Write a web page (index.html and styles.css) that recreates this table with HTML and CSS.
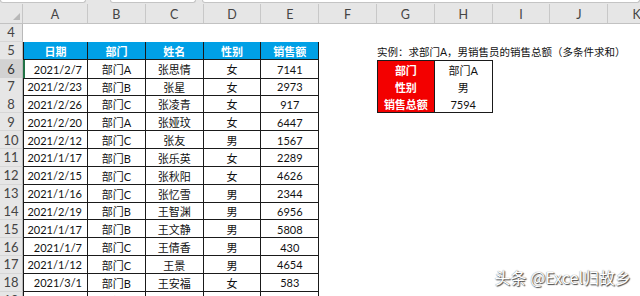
FILE: index.html
```html
<!DOCTYPE html>
<html lang="zh">
<head>
<meta charset="utf-8">
<link rel="stylesheet" href="styles.css">
</head>
<body>
<div class="screen">
  <div class="topbar">
    <div class="box b1"></div>
    <div class="box b2"></div>
    <div class="box b3"></div>
  </div>
  <div class="colhead">
    <div class="corner"><span class="tri"></span></div>
    <div class="ch">A</div><div class="ch">B</div><div class="ch">C</div><div class="ch">D</div><div class="ch">E</div>
    <div class="ch">F</div><div class="ch">G</div><div class="ch">H</div><div class="ch">I</div><div class="ch">J</div><div class="ch">K</div>
  </div>

  <div class="row"><div class="rh">4</div></div>

  <div class="row">
    <div class="rh">5</div>
    <div class="t th first">日期</div><div class="t th">部门</div><div class="t th">姓名</div><div class="t th">性别</div><div class="t th">销售额</div>
    <div class="note">实例：求部门A，男销售员的销售总额（多条件求和）</div>
  </div>

  <div class="row">
    <div class="rh sel">6</div>
    <div class="t first r active">2021/2/7</div><div class="t">部门A</div><div class="t">张思情</div><div class="t">女</div><div class="t">7141</div>
    <div class="k red top">部门</div><div class="k val top">部门A</div>
  </div>
  <div class="row">
    <div class="rh">7</div>
    <div class="t first r">2021/2/23</div><div class="t">部门B</div><div class="t">张星</div><div class="t">女</div><div class="t">2973</div>
    <div class="k red">性别</div><div class="k val">男</div>
  </div>
  <div class="row">
    <div class="rh">8</div>
    <div class="t first r">2021/2/26</div><div class="t">部门C</div><div class="t">张凌青</div><div class="t">女</div><div class="t">917</div>
    <div class="k red">销售总额</div><div class="k val">7594</div>
  </div>
  <div class="row">
    <div class="rh">9</div>
    <div class="t first r">2021/2/20</div><div class="t">部门A</div><div class="t">张娅玟</div><div class="t">女</div><div class="t">6447</div>
  </div>
  <div class="row">
    <div class="rh">10</div>
    <div class="t first r">2021/2/12</div><div class="t">部门C</div><div class="t">张友</div><div class="t">男</div><div class="t">1567</div>
  </div>
  <div class="row">
    <div class="rh">11</div>
    <div class="t first r">2021/1/17</div><div class="t">部门B</div><div class="t">张乐英</div><div class="t">女</div><div class="t">2289</div>
  </div>
  <div class="row">
    <div class="rh">12</div>
    <div class="t first r">2021/2/15</div><div class="t">部门C</div><div class="t">张秋阳</div><div class="t">女</div><div class="t">4626</div>
  </div>
  <div class="row">
    <div class="rh">13</div>
    <div class="t first r">2021/1/16</div><div class="t">部门C</div><div class="t">张忆雪</div><div class="t">男</div><div class="t">2344</div>
  </div>
  <div class="row">
    <div class="rh">14</div>
    <div class="t first r">2021/2/19</div><div class="t">部门B</div><div class="t">王智渊</div><div class="t">男</div><div class="t">6956</div>
  </div>
  <div class="row">
    <div class="rh">15</div>
    <div class="t first r">2021/1/17</div><div class="t">部门B</div><div class="t">王文静</div><div class="t">男</div><div class="t">5808</div>
  </div>
  <div class="row">
    <div class="rh">16</div>
    <div class="t first r">2021/1/7</div><div class="t">部门C</div><div class="t">王倩香</div><div class="t">男</div><div class="t">430</div>
  </div>
  <div class="row">
    <div class="rh">17</div>
    <div class="t first r">2021/1/12</div><div class="t">部门C</div><div class="t">王景</div><div class="t">男</div><div class="t">4654</div>
  </div>
  <div class="row">
    <div class="rh">18</div>
    <div class="t first r">2021/3/1</div><div class="t">部门B</div><div class="t">王安福</div><div class="t">女</div><div class="t">583</div>
  </div>
  <div class="row">
    <div class="rh">19</div>
    <div class="t first r">2021/2/20</div><div class="t">部门A</div><div class="t">王语嫣</div><div class="t">男</div><div class="t">574</div>
  </div>

  <div class="watermark">头条 @Excel归故乡</div>
</div>
</body>
</html>
```

FILE: styles.css
```css
* { box-sizing: border-box; }
html, body { margin: 0; padding: 0; background: #fff; }
body { width: 640px; height: 296px; overflow: hidden; }

.screen {
  position: relative;
  width: 640px;
  height: 296px;
  overflow: hidden;
  font-family: "Lato", "Noto Sans CJK SC", sans-serif;
  font-size: 11px;
  color: #111;
}

.topbar {
  height: 4px;
  background: #e6e6e6;
  display: flex;
  gap: 0;
}
.box {
  height: 3px;
  background: #fff;
  border: 1px solid #c4c4c4;
  border-top: none;
  border-radius: 0 0 3px 3px;
}
.b1 { width: 86px; }
.b2 { width: 86px; margin-left: 24px; }
.b3 { flex: 1; margin-left: 6px; }

.colhead, .row {
  display: grid;
  grid-template-columns: 23px 65px repeat(10, 57.8px);
}
.colhead {
  height: 20px;
  background: #e6e6e6;
  border-bottom: 1px solid #c2c2c2;
}
.corner {
  position: relative;
  border-right: 1px solid #c6c6c6;
}
.tri {
  position: absolute;
  right: 2px;
  bottom: 3px;
  width: 0;
  height: 0;
  border-left: 7px solid transparent;
  border-bottom: 7px solid #b8b8b8;
}
.ch {
  display: flex;
  align-items: center;
  justify-content: center;
  border-right: 1px solid #c8c8c8;
  color: #444;
  font-family: "Lato", sans-serif;
  font-size: 12.5px;
  padding-top: 2px;
}

.row { height: 17.85px; }
.rh {
  display: flex;
  align-items: center;
  justify-content: center;
  background: #e6e6e6;
  border-right: 1px solid #b9b9b9;
  border-bottom: 1px solid #d6d6d6;
  color: #444;
  font-family: "Lato", sans-serif;
  font-size: 13px;
}
.rh.sel { background: #d2d2d2; color: #333; }

.t {
  display: flex;
  align-items: center;
  justify-content: center;
  border-right: 1px solid #1a1a1a;
  border-bottom: 1px solid #1a1a1a;
  white-space: nowrap;
  padding-top: 1px;
}
.t.first { border-left: 1px solid #1a1a1a; }
.t.r { justify-content: flex-end; padding-right: 5px; }
.t.active { border-left: 2px solid #217346; }
.th {
  background: #00a0e6;
  color: #fff;
  font-weight: bold;
}

.note {
  grid-column: 8;
  white-space: nowrap;
  display: flex;
  align-items: flex-end;
  padding-bottom: 1px;
  font-size: 10.5px;
  color: #111;
}

.k {
  display: flex;
  align-items: center;
  justify-content: center;
  border-right: 1px solid #1a1a1a;
  border-bottom: 1px solid #1a1a1a;
  white-space: nowrap;
  padding-top: 1px;
}
.k.top { border-top: 1px solid #1a1a1a; }
.red {
  grid-column: 8;
  background: #f30000;
  color: #fff;
  font-weight: bold;
  border-left: 1px solid #1a1a1a;
}
.val { background: #fff; }

.watermark {
  position: absolute;
  right: 9px;
  bottom: 7px;
  font-family: "Noto Sans CJK SC", sans-serif;
  font-size: 16px;
  color: #fff;
  letter-spacing: 0;
  text-shadow: 1px 1px 1px #444, 0 0 1px #666;
}
```
